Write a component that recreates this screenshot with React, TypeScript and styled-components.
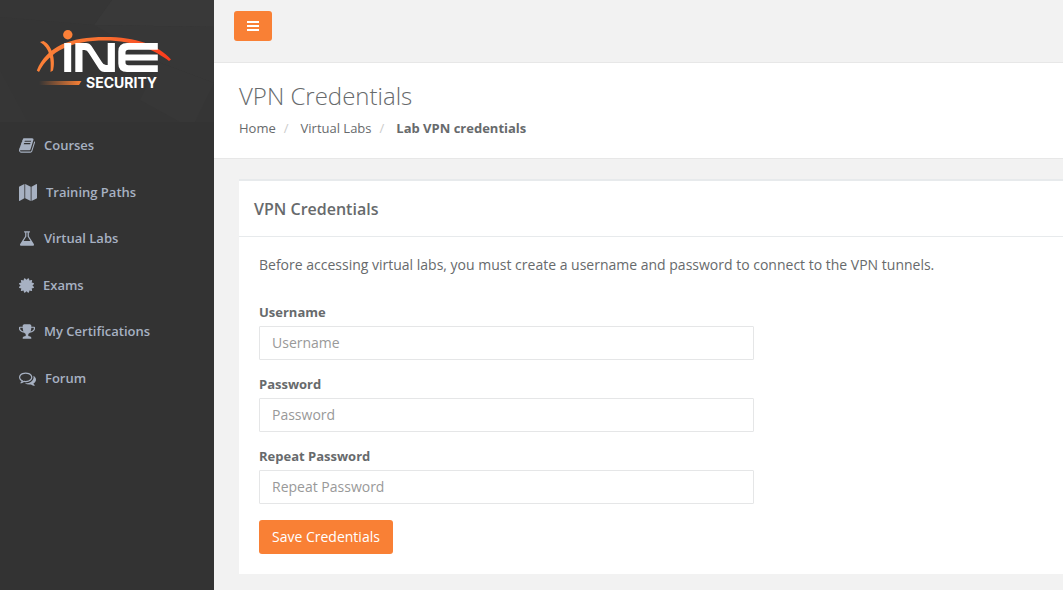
import React from "react";
import styled, { createGlobalStyle } from "styled-components";

const GlobalStyle = createGlobalStyle`
  *, *::before, *::after { box-sizing: border-box; }
  html, body, #root { min-height: 100vh; }
  body {
    margin: 0;
    background: #f2f2f2;
    color: #676a6c;
    font-family: "Open Sans", "Liberation Sans", sans-serif;
    font-size: 13px;
    line-height: 18px;
  }
`;

const Page = styled.div`
  display: flex;
  min-height: 100vh;
`;

const Sidebar = styled.aside`
  flex: 0 0 214px;
  background: #333333;
`;

const SidebarHeader = styled.div`
  position: relative;
  display: flex;
  height: 122px;
  padding: 28px 0 0 35px;
  background: #353535;
`;

const Facets = styled.svg`
  position: absolute;
  inset: 0;
  width: 100%;
  height: 100%;
`;

const Logo = styled.svg`
  position: relative;
  width: 138px;
  height: 64px;
`;

const NavList = styled.ul`
  list-style: none;
  margin: 0;
  padding: 0;
`;

const NavItem = styled.li`
  padding-bottom: 1px;
  &:nth-child(even) { padding-bottom: 0; }
`;

const NavLink = styled.a`
  display: flex;
  align-items: center;
  gap: 9px;
  height: 46px;
  padding: 0 19px;
  color: #a7b1c2;
  font-weight: 600;
  text-decoration: none;
`;

const NavIcon = styled.svg`
  flex: none;
  height: 17px;
  fill: currentColor;
`;

const Main = styled.div`
  flex: 1;
  min-width: 0;
`;

const Topbar = styled.header`
  height: 63px;
  padding: 11px 20px;
  border-bottom: 1px solid #e7e7e7;
`;

const Button = styled.button`
  display: inline-flex;
  align-items: center;
  justify-content: center;
  border: 0;
  border-radius: 3px;
  background: #f98035;
  color: #ffffff;
  font: inherit;
  cursor: pointer;
`;

const MenuButton = styled(Button)`
  width: 38px;
  height: 30px;
`;

const SaveButton = styled(Button)`
  height: 34px;
  padding: 0 13px;
  font-size: 14px;
`;

const Heading = styled.section`
  padding: 17px 25px 21px;
  background: #ffffff;
  border-bottom: 1px solid #e7e7e7;
`;

const Title = styled.h1`
  margin: 0 0 7px;
  font-size: 24px;
  line-height: 32px;
  font-weight: 300;
`;

const Breadcrumb = styled.ol`
  display: flex;
  list-style: none;
  margin: 0;
  padding: 0;
`;

const Crumb = styled.li`
  & + &::before {
    content: "/";
    padding: 0 12px 0 8px;
    color: #cccccc;
  }
  a { color: inherit; text-decoration: none; }
`;

const Panel = styled.section`
  margin: 20px 0 0 25px;
  background: #ffffff;
  border-top: 2px solid #e7eaec;
`;

const PanelTitle = styled.h2`
  margin: 0;
  padding: 16px 15px 15px;
  border-bottom: 1px solid #e7eaec;
  font-size: 16px;
  line-height: 24px;
  font-weight: 600;
`;

const PanelBody = styled.div`
  padding: 18px 20px 20px;
`;

const Intro = styled.p`
  margin: 0 0 28px;
  font-size: 14px;
  line-height: 20px;
`;

const Field = styled.div`
  display: flex;
  flex-direction: column;
  gap: 5px;
  width: 64%;
  max-width: 495px;
  margin-bottom: 15px;
  label { font-weight: 700; line-height: 18px; }
`;

const Actions = styled.div`
  display: flex;
  padding-top: 1px;
`;

const TextInput = styled.input`
  width: 100%;
  height: 34px;
  padding: 0 12px 1px;
  border: 1px solid #e5e6e7;
  border-radius: 1px;
  background: #ffffff;
  color: inherit;
  font: inherit;
  font-size: 14px;
  &::placeholder { color: #999999; opacity: 1; }
`;

const navItems = [
  {
    label: "Courses", width: 16, viewBox: "64 0 1664 1792",
    path: "M1703 478q40 57 18 129l-275 906q-19 64-76.5 107.5t-122.5 43.5h-923q-77 0-148.5-53.5t-99.5-131.5q-24-67-2-127 0-4 3-27t4-37q1-8-3-21.5t-3-19.5q2-11 8-21t16.5-23.5 16.5-23.5q23-38 45-91.5t30-91.5q3-10 .5-30t-.5-28q3-11 17-28t17-23q21-36 42-92t25-90q1-9-2.5-32t.5-28q4-13 22-30.5t22-22.5q19-26 42.5-84.5t27.5-96.5q1-8-3-25.5t-2-26.5q2-8 9-18t18-23 17-21q8-12 16.5-30.5t15-35 16-36 19.5-32 26.5-23.5 36-11.5 47.5 5.5l-1 3q38-9 51-9h761q74 0 114 56t18 130l-274 906q-36 119-71.5 153.5t-128.5 34.5h-869q-27 0-38 15-11 16-1 43 24 70 144 70h923q29 0 56-15.5t35-41.5l300-987q7-22 5-57 38 15 59 43zm-1064 2q-4 13 2 22.5t20 9.5h608q13 0 25.5-9.5t16.5-22.5l21-64q4-13-2-22.5t-20-9.5h-608q-13 0-25.5 9.5t-16.5 22.5zm-83 256q-4 13 2 22.5t20 9.5h608q13 0 25.5-9.5t16.5-22.5l21-64q4-13-2-22.5t-20-9.5h-608q-13 0-25.5 9.5t-16.5 22.5z",
  },
  {
    label: "Training Paths", width: 18, viewBox: "0 0 18 18",
    path: "M0 3.200Q0 2.800 .4 2.600L5.400 0V15.200L.5 17.900Q0 18.100 0 17.600ZM6.200 0L11.700 2.800V18L6.200 15.200ZM12.500 2.800L17.500 .1Q18 -.1 18 .4V14.800Q18 15.200 17.600 15.400L12.500 18Z",
  },
  {
    label: "Virtual Labs", width: 16, viewBox: "64 0 1664 1792",
    path: "M1591 1448q56 89 21.5 152.5t-140.5 63.5h-1152q-106 0-140.5-63.5t21.5-152.5l503-793v-399h-64q-26 0-45-19t-19-45 19-45 45-19h512q26 0 45 19t19 45-19 45-45 19h-64v399zm-779-725l-272 429h712l-272-429-20-31v-436h-128v436z",
  },
  {
    label: "Exams", width: 15, viewBox: "128 0 1536 1792",
    path: "M1504 896l138 135q30 28 20 70-12 41-52 51l-188 48 53 186q12 41-19 70-29 31-70 19l-186-53-48 188q-10 40-51 52-12 2-19 2-31 0-51-22l-135-138-135 138q-28 30-70 20-41-11-51-52l-48-188-186 53q-41 12-70-19-31-29-19-70l53-186-188-48q-40-10-52-51-10-42 20-70l138-135-138-135q-30-28-20-70 12-41 52-51l188-48-53-186q-12-41 19-70 29-31 70-19l186 53 48-188q10-41 51-51 41-12 70 19l135 139 135-139q29-30 70-19 41 10 51 51l48 188 186-53q41-12 70 19 31 29 19 70l-53 186 188 48q40 10 52 51 10 42-20 70z",
  },
  {
    label: "My Certifications", width: 16, viewBox: "64 0 1664 1792",
    path: "M522 883q-74-162-74-371h-256v96q0 78 94.5 162t235.5 113zm1078-275v-96h-256q0 209-74 371 141-29 235.5-113t94.5-162zm128-128v128q0 71-41.5 143t-112 130-173 97.5-215.5 44.5q-42 54-95 95-38 34-52.5 72.5t-14.5 89.5q0 54 30.5 91t97.5 37q75 0 133.5 45.5t58.5 114.5v64q0 14-9 23t-23 9h-832q-14 0-23-9t-9-23v-64q0-69 58.5-114.5t133.5-45.5q67 0 97.5-37t30.5-91q0-51-14.5-89.5t-52.5-72.5q-53-41-95-95-113-5-215.5-44.5t-173-97.5-112-130-41.5-143v-128q0-40 28-68t68-28h288v-96q0-66 47-113t113-47h576q66 0 113 47t47 113v96h288q40 0 68 28t28 68z",
  },
  {
    label: "Forum", width: 17, viewBox: "0 0 1792 1792",
    path: "M704 384q-153 0-286 52t-211.5 141-78.5 191q0 82 53 158t149 132l97 56-35 84q34-20 62-39l44-31 53 10q78 14 153 14 153 0 286-52t211.5-141 78.5-191-78.5-191-211.5-141-286-52zm0-128q191 0 353.5 68.5t256.5 186.5 94 257-94 257-256.5 186.5-353.5 68.5q-86 0-176-16-124 88-278 128-36 9-86 16h-3q-11 0-20.5-8t-11.5-21q-1-3-1-6.5t.5-6.5 2-6l2.5-5 3.5-5.5 4-5 4.5-5 4-4.5q5-6 23-25t26-29.5 22.5-29 25-38.5 20.5-44q-124-72-195-177t-71-224q0-139 94-257t256.5-186.5 353.5-68.5zm822 1169q10 24 20.5 44t25 38.5 22.5 29 26 29.5 23 25q1 1 4 4.5t4.5 5 4 5 3.5 5.5l2.5 5 2 6 .5 6.5-1 6.5q-3 14-13 22t-22 7q-50-7-86-16-154-40-278-128-90 16-176 16-271 0-472-132 58 4 88 4 161 0 309-45t264-129q125-92 192-212t67-254q0-77-23-152 129 71 204 178t75 230q0 120-71 224.5t-195 176.5z",
  },
];

const fields = [
  { id: "username", label: "Username", type: "text" },
  { id: "password", label: "Password", type: "password" },
  { id: "repeat-password", label: "Repeat Password", type: "password" },
];

function BrandLogo() {
  return (
    <Logo viewBox="35 28 138 64" role="img" aria-label="INE Security">
      <defs>
        <linearGradient id="arc" gradientUnits="userSpaceOnUse" x1="37" y1="0" x2="171" y2="0">
          <stop offset="0" stopColor="#fb8038" />
          <stop offset="0.5" stopColor="#f86f30" />
          <stop offset="1" stopColor="#fb3a1c" />
        </linearGradient>
        <linearGradient id="bar" gradientUnits="userSpaceOnUse" x1="39" y1="0" x2="81" y2="0">
          <stop offset="0" stopColor="#f98035" stopOpacity="0" />
          <stop offset="1" stopColor="#f98035" />
        </linearGradient>
      </defs>
      <path d="M36.800 70.500C47 46 70 37 105 37C136 37 158 45 171 59.500L169 61C156 51 135 40.500 105 40.500C71 40.500 50 51 39 72Z" fill="url(#arc)" />
      <path d="M40 42L43.500 41C52 45 56 60 53 70.500L50.500 72C51.500 59 50 48 40 42Z" fill="#fb8038" />
      <circle cx="67.800" cy="34.700" r="4.700" fill="#fb8038" />
      <g fill="#ffffff">
        <path d="M64.200 43H71.200V72H64.200Z" />
        <path d="M75.300 72V43H86Q89.500 43 91.500 46L102 62.200Q103.500 65 106 65H107.700V43H114.900V72H104.500Q101 72 99 69L88.700 53Q87.200 50 84.500 50H82.500V72Z" />
        <path d="M157.800 43V49.800H128.500Q125.500 49.800 125.500 52.500V54.500H157.800V60.500H125.500V62.500Q125.500 65.200 128.500 65.200H157.800V72H127Q118.300 72 118.300 63.500V51.500Q118.300 43 127 43Z" />
      </g>
      <path d="M39 81H81.500L79 85H39Z" fill="url(#bar)" />
      <text x="86" y="88" fill="#ffffff" fontFamily="Inter, sans-serif" fontSize="14" fontWeight="700">SECURITY</text>
    </Logo>
  );
}

export default function App() {
  return (
    <>
      <GlobalStyle />
      <Page>
        <Sidebar>
          <SidebarHeader>
            <Facets viewBox="0 0 214 122" preserveAspectRatio="none" aria-hidden="true">
              <path d="M0 0H112L94 25L0 17Z" fill="#363636" />
              <path d="M112 0H214V27L94 25Z" fill="#393939" />
              <path d="M94 25L214 27V83L158 62Z" fill="#373737" />
              <path d="M0 70L28 122H0Z" fill="#363636" />
              <path d="M158 62L214 83L195 122H180L140 100Z" fill="#373737" />
            </Facets>
            <BrandLogo />
          </SidebarHeader>
          <nav>
            <NavList>
              {navItems.map((item) => (
                <NavItem key={item.label}>
                  <NavLink href="#">
                    <NavIcon width={item.width} viewBox={item.viewBox} preserveAspectRatio="none" aria-hidden="true">
                      <path d={item.path} />
                    </NavIcon>
                    {item.label}
                  </NavLink>
                </NavItem>
              ))}
            </NavList>
          </nav>
        </Sidebar>
        <Main>
          <Topbar>
            <MenuButton type="button" aria-label="Toggle navigation">
              <svg width="12" height="10" viewBox="0 0 12 10" fill="currentColor" aria-hidden="true">
                <path d="M0 0H12V2H0ZM0 4H12V6H0ZM0 8H12V10H0Z" />
              </svg>
            </MenuButton>
          </Topbar>
          <main>
            <Heading>
              <Title>VPN Credentials</Title>
              <nav aria-label="Breadcrumb">
                <Breadcrumb>
                  <Crumb><a href="#">Home</a></Crumb>
                  <Crumb><a href="#">Virtual Labs</a></Crumb>
                  <Crumb><strong>Lab VPN credentials</strong></Crumb>
                </Breadcrumb>
              </nav>
            </Heading>
            <Panel>
              <PanelTitle>VPN Credentials</PanelTitle>
              <PanelBody>
                <Intro>Before accessing virtual labs, you must create a username and password to connect to the VPN tunnels.</Intro>
                <form onSubmit={(event) => event.preventDefault()}>
                  {fields.map((field) => (
                    <Field key={field.id}>
                      <label htmlFor={field.id}>{field.label}</label>
                      <TextInput id={field.id} type={field.type} placeholder={field.label} />
                    </Field>
                  ))}
                  <Actions>
                    <SaveButton type="submit">Save Credentials</SaveButton>
                  </Actions>
                </form>
              </PanelBody>
            </Panel>
          </main>
        </Main>
      </Page>
    </>
  );
}
